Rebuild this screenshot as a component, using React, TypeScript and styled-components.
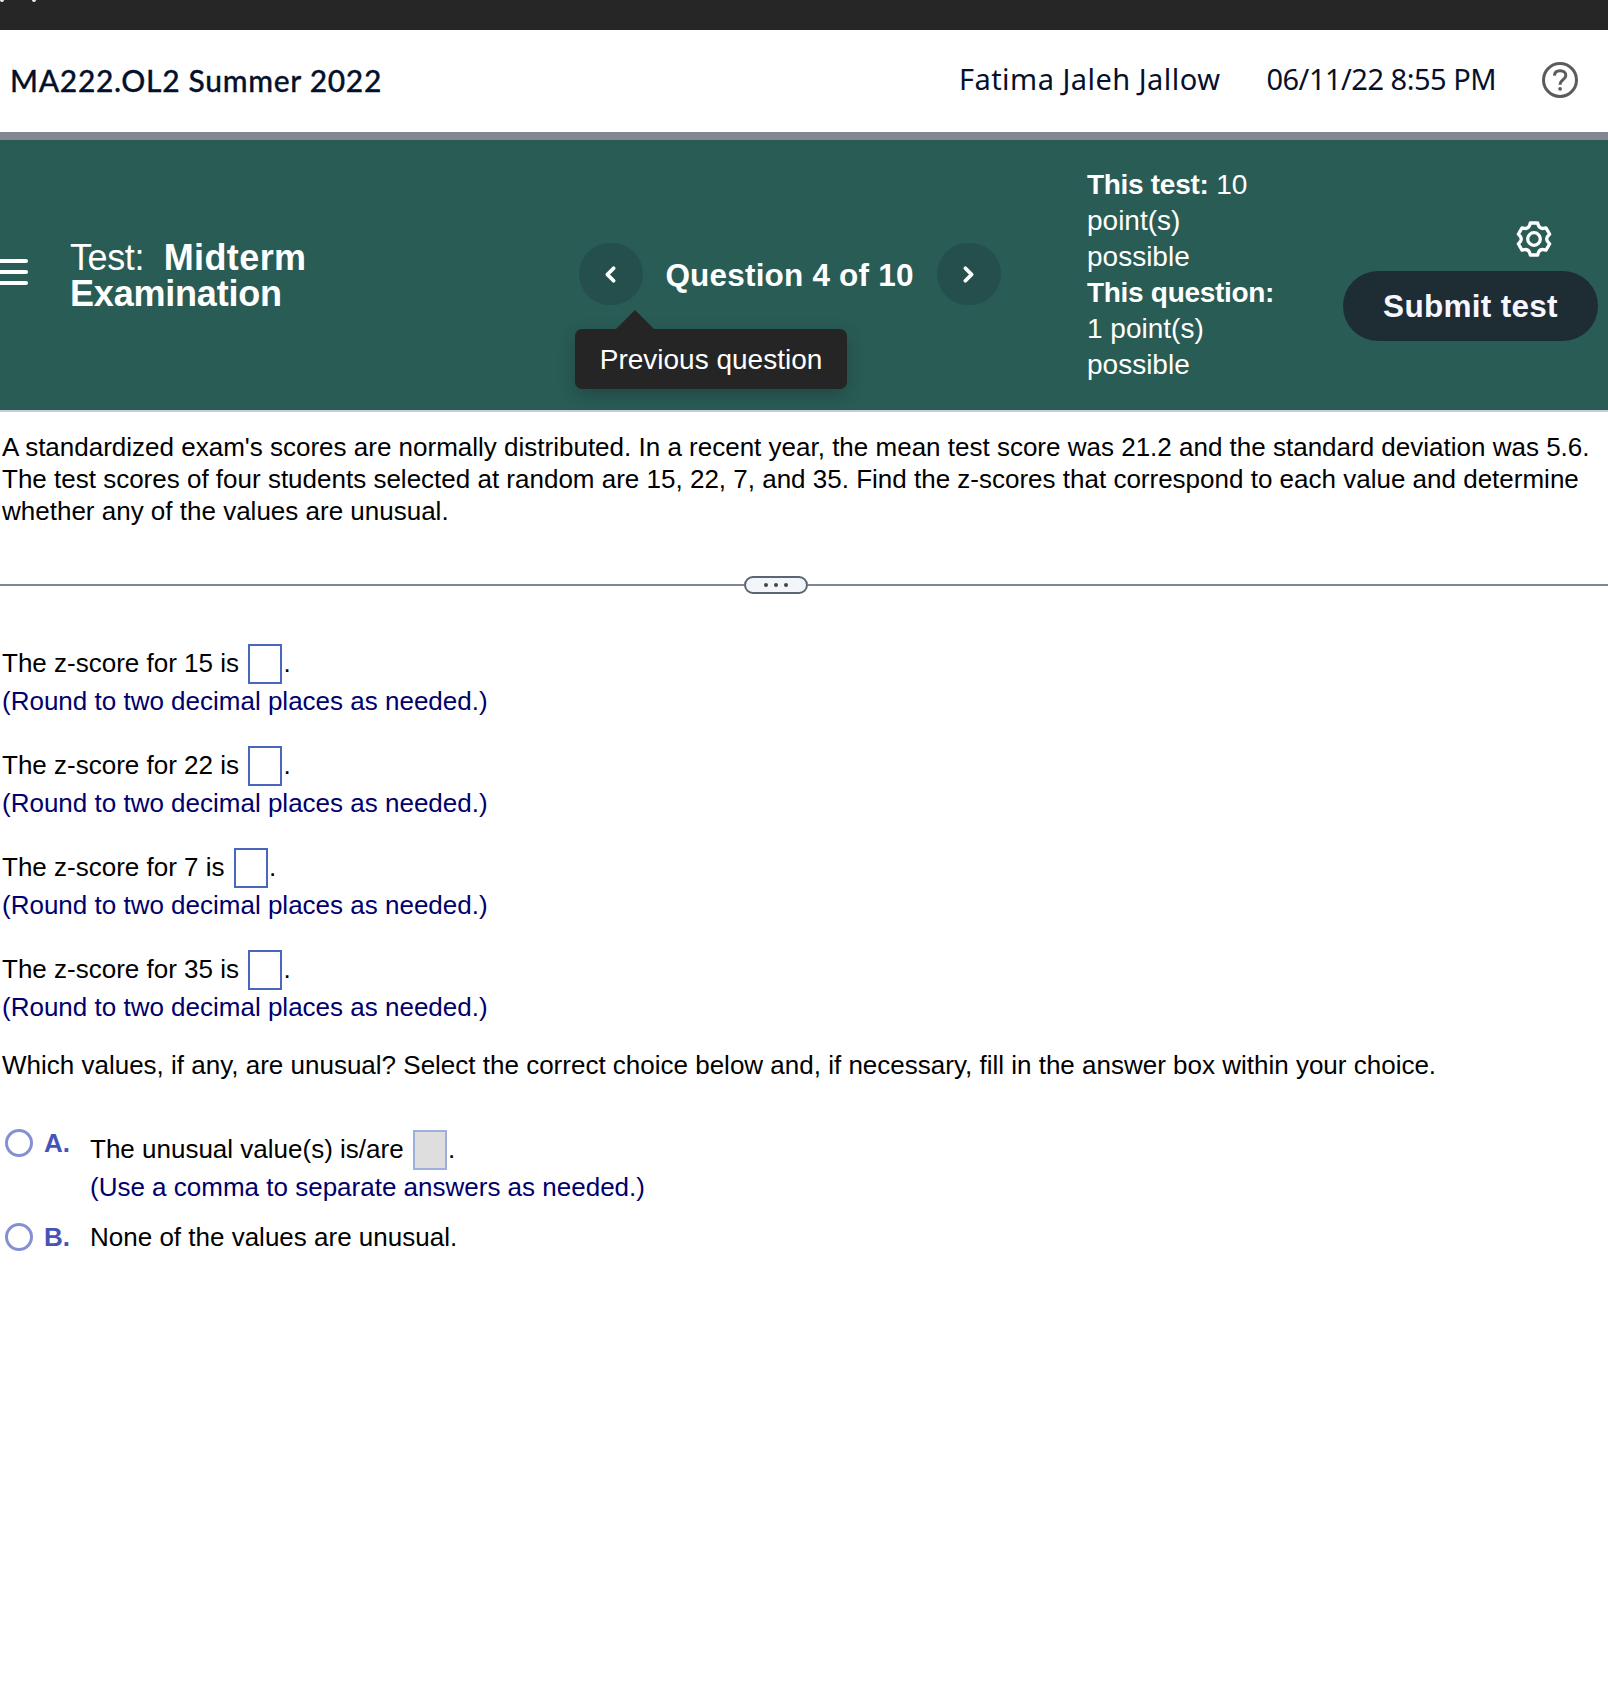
import React from "react";
import styled, { createGlobalStyle } from "styled-components";
import { ChevronLeft, ChevronRight } from "lucide-react";

const sans = `"Liberation Sans", Arial, Helvetica, sans-serif`;

const GlobalStyle = createGlobalStyle`
  * { box-sizing: border-box; }
  body { margin: 0; background: #fff; color: #000; font-family: ${sans}; }
  #root { height: 1688px; overflow: hidden; }
  button { font: inherit; border: 0; padding: 0; color: inherit; }
  p { margin: 0; }
`;

const BrowserStrip = styled.div`
  height: 30px;
  background: #262626;
  display: flex;
  gap: 28px;
`;
const StripMark = styled.i`
  width: 4px;
  height: 1.5px;
  background: #eee;
  border-radius: 0 0 2px 2px;
`;

const CourseBar = styled.header`
  height: 110px;
  border-bottom: 8px solid #818793;
  display: flex;
  align-items: center;
  padding: 0 30px 2px 10px;
  color: #05112a;
  white-space: nowrap;
`;
const CourseName = styled.h1`
  margin: 0 auto 0 0;
  font: 500 30px/40px Lato, sans-serif;
  letter-spacing: 0.7px;
  -webkit-text-stroke: 0.3px #05112a;
`;
const HeaderText = styled.span<{ $spacing: number }>`
  font: 400 29px/40px "Noto Sans", "Open Sans", sans-serif;
  letter-spacing: ${(p) => p.$spacing}px;
  margin-right: 46px;
  padding-bottom: 2px;
`;

const TestBar = styled.section`
  height: 272px;
  background: #295c55;
  border-bottom: 2px solid #c6cdd8;
  color: #fff;
  display: flex;
  align-items: flex-start;
`;
const MenuButton = styled.button`
  width: 28px;
  height: 26px;
  margin: 119px 42px 0 0;
  background: none;
  display: flex;
  flex-direction: column;
  gap: 7px;
`;
const MenuLine = styled.span`
  height: 4px;
  width: 28px;
  flex: none;
  background: #fff;
  border-radius: 0 2px 2px 0;
`;
const TestTitle = styled.h2`
  width: 260px;
  margin: 100px 249px 0 0;
  font: 700 36px/36px ${sans};
  letter-spacing: -0.2px;
`;
const TitleLabel = styled.span`
  font-weight: 400;
  letter-spacing: -0.4px;
  margin-right: 10px;
`;
const TitleLead = styled.span`
  letter-spacing: 0.4px;
`;
const Pager = styled.nav`
  width: 422px;
  margin: 103px 86px 0 0;
  display: flex;
  align-items: center;
  justify-content: space-between;
`;
const PagerSlot = styled.div`
  position: relative;
`;
const RoundButton = styled.button`
  width: 64px;
  height: 62px;
  padding-right: 2px;
  border-radius: 32px;
  background: #244f4d;
  display: flex;
  align-items: center;
  justify-content: center;
`;
const PagerLabel = styled.strong`
  font: 700 31.5px/36px ${sans};
  letter-spacing: 0.2px;
  padding: 1px 1px 0 0;
  white-space: nowrap;
`;
const Tooltip = styled.div`
  position: absolute;
  top: 86px;
  left: -4px;
  width: 272px;
  height: 60px;
  border-radius: 7px;
  background: #252525;
  box-shadow: 0 6px 18px rgba(0, 0, 0, 0.22);
  font-size: 28px;
  line-height: 62px;
  text-align: center;
  white-space: nowrap;
  &::before {
    content: "";
    position: absolute;
    left: 41px;
    top: -19px;
    border: solid transparent;
    border-width: 0 19.5px 19px;
    border-bottom-color: #252525;
  }
`;
const Points = styled.div`
  width: 192px;
  margin: 27px 64px 0 0;
  font-size: 28px;
  line-height: 36px;
  b {
    letter-spacing: -0.3px;
  }
`;
const Actions = styled.div`
  width: 255px;
  margin-top: 79px;
  display: flex;
  flex-direction: column;
  align-items: flex-end;
  gap: 12px;
`;
const GearButton = styled.button`
  height: 40px;
  width: 40px;
  margin-right: 44px;
  background: none;
`;
const SubmitButton = styled.button`
  width: 255px;
  height: 70px;
  border-radius: 35px;
  background: #1e2c34;
  color: #f6f7ff;
  font: 700 31.5px/70px ${sans};
  letter-spacing: 0.3px;
`;

const Question = styled.main`
  padding-left: 2px;
  font-size: 26px;
  line-height: 32px;
`;
const Prompt = styled.p`
  padding-top: 19px;
  white-space: pre-line;
`;
const Divider = styled.div`
  margin: 49px 0 50px -2px;
  display: flex;
  align-items: center;
`;
const Rule = styled.div<{ $width?: number }>`
  height: 2px;
  background: #7f8694;
  ${(p) => (p.$width ? `width: ${p.$width}px;` : "flex: 1;")}
`;
const Expander = styled.button`
  width: 64px;
  height: 18px;
  border: 2px solid #5c6575;
  border-radius: 9px;
  background: #f3f6f8;
  display: flex;
  align-items: center;
  justify-content: center;
  gap: 6px;
`;
const Dot = styled.i`
  width: 4px;
  height: 4px;
  border-radius: 50%;
  background: #454545;
`;
const Answers = styled.div`
  height: 405px;
`;
const AnswerBlock = styled.div`
  height: 102px;
`;
const AnswerLine = styled.div`
  height: 40px;
  display: flex;
  line-height: 38px;
  white-space: nowrap;
`;
const AnswerBox = styled.span<{ $disabled?: boolean }>`
  width: 34px;
  height: 40px;
  margin: 0 1.5px 0 9px;
  border: 2px solid ${(p) => (p.$disabled ? "#9fafdc" : "#4867bd")};
  background: ${(p) => (p.$disabled ? "#dedede" : "#fff")};
`;
const Hint = styled.p`
  color: #00006c;
  padding-top: 1px;
`;
const Choices = styled.div`
  padding: 49px 0 0 3px;
  display: flex;
  flex-direction: column;
`;
const Choice = styled.div<{ $height: number }>`
  height: ${(p) => p.$height}px;
  display: grid;
  grid-template-columns: 39px 46px 1fr;
  align-items: start;
`;
const Radio = styled.span<{ $top: number }>`
  width: 28px;
  height: 28px;
  margin-top: ${(p) => p.$top}px;
  border: 3px solid #8590d3;
  border-radius: 50%;
`;
const Letter = styled.b<{ $top: number }>`
  margin-top: ${(p) => p.$top}px;
  color: #4454b8;
`;

const polar = (degrees: number, radius: number) => {
  const a = (degrees * Math.PI) / 180;
  return `${(20 + radius * Math.sin(a)).toFixed(2)} ${(20 - radius * Math.cos(a)).toFixed(2)}`;
};

const gearPath =
  [0, 60, 120, 180, 240, 300]
    .map(
      (t) =>
        `${t ? "L" : "M"}${polar(t - 13, 16.4)} L${polar(t + 13, 16.4)} L${polar(t + 18, 14.2)} ` +
        `Q${polar(t + 30, 11.6)} ${polar(t + 42, 14.2)}`
    )
    .join(" ") + "Z";

const GearIcon = () => (
  <svg width="40" height="40" viewBox="0 0 40 40" fill="none" stroke="#fff" strokeWidth="3.3" strokeLinejoin="round">
    <path d={gearPath} />
    <circle cx="20" cy="20" r="6.3" />
  </svg>
);

const scores = [15, 22, 7, 35];

export default function App() {
  return (
    <>
      <GlobalStyle />
      <BrowserStrip>
        <StripMark />
        <StripMark />
      </BrowserStrip>
      <CourseBar>
        <CourseName>MA222.OL2 Summer 2022</CourseName>
        <HeaderText $spacing={0.47}>Fatima Jaleh Jallow</HeaderText>
        <HeaderText $spacing={-0.5}>06/11/22 8:55 PM</HeaderText>
        <svg width="36" height="36" viewBox="0 0 36 36" fill="none" stroke="#5c5c5c" strokeWidth="3">
          <circle cx="18" cy="18" r="16.5" />
          <path d="M12.4 13.6c.2-3.1 2.6-4.9 5.7-4.9 3.3 0 5.7 1.9 5.7 4.8 0 4.2-5.7 4.2-5.7 8.6v.6" />
          <circle cx="18.1" cy="26.8" r="1.9" fill="#5c5c5c" stroke="none" />
        </svg>
      </CourseBar>
      <TestBar>
        <MenuButton aria-label="Menu">
          <MenuLine />
          <MenuLine />
          <MenuLine />
        </MenuButton>
        <TestTitle>
          <TitleLabel>Test: </TitleLabel>
          <TitleLead>Midterm</TitleLead> Examination
        </TestTitle>
        <Pager>
          <PagerSlot>
            <RoundButton aria-label="Previous">
              <ChevronLeft size={25} strokeWidth={3.7} />
            </RoundButton>
            <Tooltip>Previous question</Tooltip>
          </PagerSlot>
          <PagerLabel>Question 4 of 10</PagerLabel>
          <RoundButton aria-label="Next">
            <ChevronRight size={25} strokeWidth={3.7} />
          </RoundButton>
        </Pager>
        <Points>
          <p><b>This test:</b> 10 point(s) possible</p>
          <p><b>This question:</b> 1 point(s) possible</p>
        </Points>
        <Actions>
          <GearButton aria-label="Settings">
            <GearIcon />
          </GearButton>
          <SubmitButton>Submit test</SubmitButton>
        </Actions>
      </TestBar>
      <Question>
        <Prompt>
          {`A standardized exam's scores are normally distributed. In a recent year, the mean test score was 21.2 and the standard deviation was 5.6.
          The test scores of four students selected at random are 15, 22, 7, and 35. Find the z-scores that correspond to each value and determine
          whether any of the values are unusual.`}
        </Prompt>
        <Divider>
          <Rule $width={744} />
          <Expander aria-label="Expand">
            <Dot />
            <Dot />
            <Dot />
          </Expander>
          <Rule />
        </Divider>
        <Answers>
          {scores.map((score) => (
            <AnswerBlock key={score}>
              <AnswerLine>
                The z-score for {score} is
                <AnswerBox />.
              </AnswerLine>
              <Hint>(Round to two decimal places as needed.)</Hint>
            </AnswerBlock>
          ))}
        </Answers>
        <p>
          Which values, if any, are unusual? Select the correct choice below and, if necessary, fill in the answer box
          within your choice.
        </p>
        <Choices>
          <Choice $height={91}>
            <Radio $top={-1} />
            <Letter $top={-3}>A.</Letter>
            <div>
              <AnswerLine>
                The unusual value(s) is/are
                <AnswerBox $disabled />.
              </AnswerLine>
              <Hint>(Use a comma to separate answers as needed.)</Hint>
            </div>
          </Choice>
          <Choice $height={40}>
            <Radio $top={2} />
            <Letter $top={0}>B.</Letter>
            <p>None of the values are unusual.</p>
          </Choice>
        </Choices>
      </Question>
    </>
  );
}
